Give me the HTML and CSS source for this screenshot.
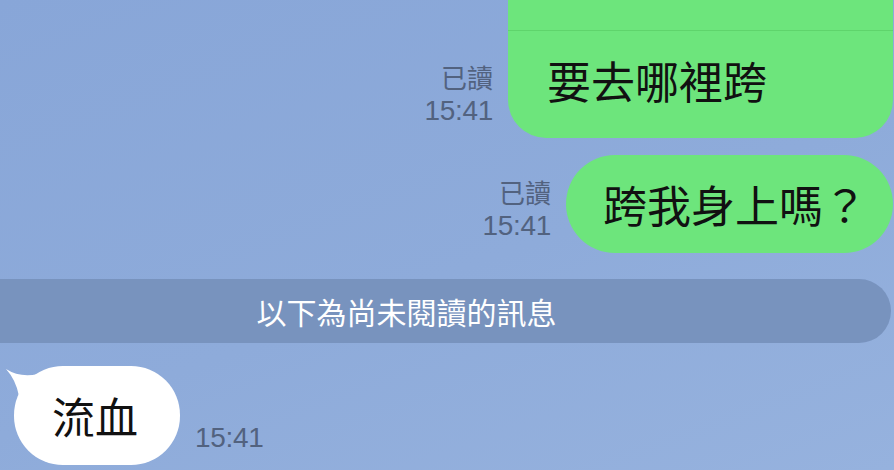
FILE: index.html
```
<!DOCTYPE html>
<html>
    <head>
        <meta charset="utf-8">
        <link rel="stylesheet" href="styles.css">
    </head>
    <body>
        <div id="chat">

            <div class="row me first">
                <div class="meta">
                    <div class="read">已讀</div>
                    <div class="time">15:41</div>
                </div>
                <div class="bubble green tall">
                    <div class="quote"></div>
                    <div class="msg">要去哪裡跨</div>
                </div>
            </div>

            <div class="row me second">
                <div class="meta">
                    <div class="read">已讀</div>
                    <div class="time">15:41</div>
                </div>
                <div class="bubble green pill">跨我身上嗎？</div>
            </div>

            <div id="unread">以下為尚未閱讀的訊息</div>

            <div class="row them">
                <div class="bubble white pill">
                    <svg class="tail" width="44" height="44" viewBox="0 0 44 44">
                        <path d="M2 3 Q16 12 34 8 L40 40 L15 30 Q12 14 2 3 Z" fill="#fff"/>
                    </svg>
                    流血
                </div>
                <div class="meta">
                    <div class="time">15:41</div>
                </div>
            </div>

        </div>
    </body>
</html>
```

FILE: styles.css
```
body{
    margin: 0;
    height: 470px;
    overflow: hidden;
    background: linear-gradient(160deg, #88a6d8 0%, #8eabda 55%, #96b2de 100%);
    font-family: "Noto Sans CJK TC", "Liberation Sans", sans-serif;
}

#chat{
    display: flex;
    flex-direction: column;
}

.row{
    display: flex;
    align-items: flex-end;
    gap: 15px;
}
.me{
    justify-content: flex-end;
    padding-right: 1px;
}
.second{
    margin-top: 17px;
}
.them{
    margin-top: 23px;
    padding-left: 14px;
}

.meta{
    text-align: right;
    color: #52627f;
    padding-bottom: 10px;
}
.read{
    font-size: 26px;
    line-height: 34px;
}
.time{
    font-family: "Liberation Sans", sans-serif;
    font-size: 28px;
    letter-spacing: -0.3px;
    line-height: 34px;
}

.bubble{
    position: relative;
    box-sizing: border-box;
    color: #111;
    font-size: 44px;
}
.green{
    background: #6de57c;
}
.white{
    background: #fff;
}
.tall{
    width: 385px;
    height: 138px;
    border-radius: 0 0 38px 38px;
}
.quote{
    height: 30px;
    border-bottom: solid 1px #5fd46c;
}
.msg{
    padding: 24px 0 0 39px;
    line-height: 50px;
}
.pill{
    height: 98px;
    line-height: 98px;
    border-radius: 49px;
    padding-left: 37px;
}
.second .pill{
    width: 327px;
}
.them .pill{
    width: 166px;
    height: 99px;
    line-height: 99px;
    padding-left: 38px;
    font-size: 43px;
}
.tail{
    position: absolute;
    left: -10px;
    top: 0;
}

#unread{
    margin-top: 26px;
    width: 891px;
    height: 64px;
    box-sizing: border-box;
    padding-right: 78px;
    border-radius: 0 32px 32px 0;
    background: #7893be;
    color: #fff;
    font-size: 30px;
    line-height: 64px;
    text-align: center;
}
```
